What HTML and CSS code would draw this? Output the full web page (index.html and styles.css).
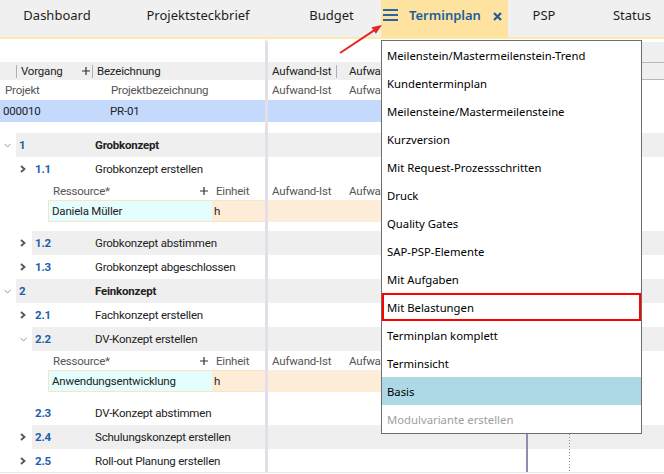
FILE: index.html
```html
<!DOCTYPE html>
<html lang="de">
<head>
    <meta charset="UTF-8">
    <title>Terminplan</title>
    <link rel="stylesheet" href="styles.css">
</head>
<body>

    <div class="tabs">
        <div class="tab w-dash">Dashboard</div>
        <div class="tab w-proj">Projektsteckbrief</div>
        <div class="tab w-budget">Budget</div>
        <div class="tab w-termin active">
            <svg class="burger" width="15" height="13" viewBox="0 0 15 13">
                <rect x="0" y="0" width="15" height="2"/>
                <rect x="0" y="5" width="15" height="2"/>
                <rect x="0" y="10" width="15" height="2"/>
            </svg>
            <span class="tab-title">Terminplan</span>
            <svg class="close" width="9" height="9" viewBox="0 0 9 9">
                <path d="M1 1L8 8M8 1L1 8"/>
            </svg>
        </div>
        <div class="tab w-psp">PSP</div>
        <div class="tab w-status">Status</div>
    </div>

    <div class="grid">
        <!-- Kopfbereich -->
        <div class="row blank">
            <div class="l"></div>
            <div class="r"><div class="t"></div><div class="g ghead"></div></div>
        </div>
        <div class="row head">
            <div class="l">
                <span class="sep first"></span>
                <span class="h-vor">Vorgang</span>
                <span class="plus"><svg width="8" height="8" viewBox="0 0 8 8"><path d="M4 0V8M0 4H8"/></svg></span>
                <span class="sep"></span>
                <span class="h-bez">Bezeichnung</span>
            </div>
            <div class="r">
                <div class="t"><span class="c1">Aufwand-Ist</span><span class="sep"></span><span class="c2">Aufwand-Plan</span></div>
                <div class="g ghead gline"></div>
            </div>
        </div>
        <div class="row label">
            <div class="l"><span class="p1">Projekt</span><span>Projektbezeichnung</span></div>
            <div class="r"><div class="t"><span class="d1">Aufwand-Ist</span><span class="d2">Aufwand-Plan</span></div><div class="g"></div></div>
        </div>
        <div class="row proj">
            <div class="l"><span class="p0">000010</span><span>PR-01</span></div>
            <div class="r"><div class="t"></div><div class="g"></div></div>
        </div>
        <div class="row gap11"><div class="l"></div><div class="r"><div class="t"></div><div class="g"></div></div></div>

        <!-- Vorgänge -->
        <div class="row task lv1 shade">
            <div class="l"><span class="ind"><svg class="open" width="7" height="5" viewBox="0 0 7 5"><path d="M0.5 0.8L3.5 4L6.5 0.8"/></svg></span>
                <div class="cell"><span class="num">1</span><span class="name">Grobkonzept</span></div></div>
            <div class="r"><div class="t"></div><div class="g"></div></div>
        </div>
        <div class="row task lv2">
            <div class="l"><span class="ind"><svg class="shut" width="6" height="8" viewBox="0 0 6 8"><path d="M1 1L4.5 4L1 7"/></svg></span>
                <div class="cell"><span class="num">1.1</span><span class="name">Grobkonzept erstellen</span></div></div>
            <div class="r"><div class="t"></div><div class="g"></div></div>
        </div>
        <div class="row reshead">
            <div class="l"><div class="res">
                <span class="rn">Ressource*<svg width="8" height="8" viewBox="0 0 8 8"><path d="M4 0V8M0 4H8"/></svg></span>
                <span class="ru">Einheit</span>
            </div></div>
            <div class="r"><div class="t"><span class="d1">Aufwand-Ist</span><span class="d2">Aufwand-Plan</span></div><div class="g"></div></div>
        </div>
        <div class="row resrow">
            <div class="l"><div class="res"><span class="rn">Daniela Müller</span><span class="ru">h</span></div></div>
            <div class="r"><div class="t"></div><div class="g"></div></div>
        </div>
        <div class="row gap9"><div class="l"></div><div class="r"><div class="t"></div><div class="g"></div></div></div>

        <div class="row task lv2 shade">
            <div class="l"><span class="ind"><svg class="shut" width="6" height="8" viewBox="0 0 6 8"><path d="M1 1L4.5 4L1 7"/></svg></span>
                <div class="cell"><span class="num">1.2</span><span class="name">Grobkonzept abstimmen</span></div></div>
            <div class="r"><div class="t"></div><div class="g"></div></div>
        </div>
        <div class="row task lv2">
            <div class="l"><span class="ind"><svg class="shut" width="6" height="8" viewBox="0 0 6 8"><path d="M1 1L4.5 4L1 7"/></svg></span>
                <div class="cell"><span class="num">1.3</span><span class="name">Grobkonzept abgeschlossen</span></div></div>
            <div class="r"><div class="t"></div><div class="g"></div></div>
        </div>
        <div class="row task lv1 shade">
            <div class="l"><span class="ind"><svg class="open" width="7" height="5" viewBox="0 0 7 5"><path d="M0.5 0.8L3.5 4L6.5 0.8"/></svg></span>
                <div class="cell"><span class="num">2</span><span class="name">Feinkonzept</span></div></div>
            <div class="r"><div class="t"></div><div class="g"></div></div>
        </div>
        <div class="row task lv2">
            <div class="l"><span class="ind"><svg class="shut" width="6" height="8" viewBox="0 0 6 8"><path d="M1 1L4.5 4L1 7"/></svg></span>
                <div class="cell"><span class="num">2.1</span><span class="name">Fachkonzept erstellen</span></div></div>
            <div class="r"><div class="t"></div><div class="g"></div></div>
        </div>
        <div class="row task lv2 shade">
            <div class="l"><span class="ind"><svg class="open" width="7" height="5" viewBox="0 0 7 5"><path d="M0.5 0.8L3.5 4L6.5 0.8"/></svg></span>
                <div class="cell"><span class="num">2.2</span><span class="name">DV-Konzept erstellen</span></div></div>
            <div class="r"><div class="t"></div><div class="g"></div></div>
        </div>
        <div class="row reshead">
            <div class="l"><div class="res">
                <span class="rn">Ressource*<svg width="8" height="8" viewBox="0 0 8 8"><path d="M4 0V8M0 4H8"/></svg></span>
                <span class="ru">Einheit</span>
            </div></div>
            <div class="r"><div class="t"><span class="d1">Aufwand-Ist</span><span class="d2">Aufwand-Plan</span></div><div class="g"></div></div>
        </div>
        <div class="row resrow">
            <div class="l"><div class="res"><span class="rn">Anwendungsentwicklung</span><span class="ru">h</span></div></div>
            <div class="r"><div class="t"></div><div class="g"></div></div>
        </div>
        <div class="row gap9"><div class="l"></div><div class="r"><div class="t"></div><div class="g"></div></div></div>

        <div class="row task lv2">
            <div class="l"><span class="ind"></span>
                <div class="cell"><span class="num">2.3</span><span class="name">DV-Konzept abstimmen</span></div></div>
            <div class="r"><div class="t"></div><div class="g"></div></div>
        </div>
        <div class="row task lv2 shade">
            <div class="l"><span class="ind"><svg class="shut" width="6" height="8" viewBox="0 0 6 8"><path d="M1 1L4.5 4L1 7"/></svg></span>
                <div class="cell"><span class="num">2.4</span><span class="name">Schulungskonzept erstellen</span></div></div>
            <div class="r"><div class="t"></div><div class="g"></div></div>
        </div>
        <div class="row task lv2 last">
            <div class="l"><span class="ind"><svg class="shut" width="6" height="8" viewBox="0 0 6 8"><path d="M1 1L4.5 4L1 7"/></svg></span>
                <div class="cell"><span class="num">2.5</span><span class="name">Roll-out Planung erstellen</span></div></div>
            <div class="r"><div class="t"></div><div class="g"></div></div>
        </div>
    </div>

    <!-- Hinweispfeil -->
    <svg class="arrow" width="664" height="474" viewBox="0 0 664 474">
        <line x1="340" y1="53" x2="374.5" y2="30.2"/>
        <polygon points="382,25 375.9,33.8 371.5,27.2"/>
    </svg>

    <!-- Ansichten-Menü -->
    <div class="menu">
        <div class="item">Meilenstein/Mastermeilenstein-Trend</div>
        <div class="item">Kundenterminplan</div>
        <div class="item">Meilensteine/Mastermeilensteine</div>
        <div class="item">Kurzversion</div>
        <div class="item">Mit Request-Prozessschritten</div>
        <div class="item">Druck</div>
        <div class="item">Quality Gates</div>
        <div class="item">SAP-PSP-Elemente</div>
        <div class="item">Mit Aufgaben</div>
        <div class="item marked">Mit Belastungen</div>
        <div class="item">Terminplan komplett</div>
        <div class="item">Terminsicht</div>
        <div class="item sel">Basis</div>
        <div class="item off">Modulvariante erstellen</div>
    </div>

</body>
</html>
```

FILE: styles.css
```css
* {
    box-sizing: border-box;
}

body {
    margin: 0;
    width: 664px;
    height: 474px;
    position: relative;
    overflow: hidden;
    background-color: #fff;
    font-family: Roboto, "Liberation Sans", sans-serif;
    font-size: 11.5px;
    letter-spacing: -0.2px;
    color: #222;
}

/* Reiter */
.tabs {
    display: flex;
    height: 39px;
    background-color: #f0f0f0;
    border-bottom: 2px solid #fde9a8;
    font-family: "Noto Sans", sans-serif;
    font-size: 13px;
    letter-spacing: 0;
    color: #1e1e1e;
}

.tab {
    display: flex;
    align-items: center;
    justify-content: center;
    padding-bottom: 7px;
    white-space: nowrap;
}

.w-dash { width: 114px; }
.w-proj { width: 168px; }
.w-budget { width: 99px; }
.w-termin { width: 127px; }
.w-psp { width: 72px; }
.w-status { width: 84px; padding-left: 20px; }

.tab.active {
    justify-content: flex-start;
    padding-left: 2px;
    background-color: #fde39f;
    color: #1f5e9c;
}

.burger {
    fill: #2a64a2;
    margin-top: 1px;
}

.tab-title {
    margin-left: 11px;
    font-weight: 600;
}

.close {
    margin-left: 12px;
    margin-top: 2px;
    stroke: #1f5e9c;
    stroke-width: 2.2;
}

/* Raster */
.row {
    display: flex;
}

.l {
    width: 265px;
    display: flex;
    align-items: center;
    white-space: nowrap;
    overflow: hidden;
}

.r {
    flex: 1;
    display: flex;
    border-left: 3px solid #e3dee8;
}

.t {
    width: 258px;
    display: flex;
    align-items: center;
    white-space: nowrap;
    overflow: hidden;
}

.g {
    flex: 1;
    border-left: 2px solid #8c90ad;
    background-image: linear-gradient(#8a8a8a 50%, transparent 50%);
    background-size: 1px 3px;
    background-position: 41px 0;
    background-repeat: repeat-y;
}

.g.ghead {
    background-image: none;
    background-color: #efefef;
}

.g.gline {
    border-top: 1px solid #b8b8b8;
    border-bottom: 1px solid #b8b8b8;
}

.blank { height: 23px; }
.gap11 { height: 11px; }
.gap9 { height: 9px; }

.blank .r {
    border-top: 3px solid #fff;
}

.head {
    height: 18px;
    background-color: #efefef;
}

.sep {
    width: 1px;
    height: 13px;
    flex-shrink: 0;
    background-color: #b0b0b0;
}

.sep.first {
    margin-left: 16px;
}

.h-vor {
    width: 62px;
    padding-left: 4px;
}

.plus {
    width: 13px;
    display: flex;
    justify-content: center;
}

.plus svg, .rn svg {
    stroke: #333;
    stroke-width: 1.2;
}

.h-bez {
    padding-left: 4px;
}

.head .c1 {
    width: 68px;
    padding-left: 4px;
}

/* zweite Spalte wird vom Menü verdeckt */
.head .c2 {
    width: 44px;
    padding-left: 12px;
    overflow: hidden;
}

.d2 {
    width: 32px;
    overflow: hidden;
}

.label {
    height: 20px;
    color: #555;
}

.p1 {
    width: 111px;
    padding-left: 5px;
}

.d1 {
    width: 81px;
    padding-left: 4px;
}

.proj {
    height: 22px;
}

.proj .l, .proj .t {
    background-color: #c5d9fc;
}

.p0 {
    width: 110px;
    padding-left: 3px;
}

/* Vorgänge */
.task {
    height: 24px;
}

.task .l {
    align-items: stretch;
}

.ind {
    display: flex;
    align-items: center;
    flex-shrink: 0;
}

.lv1 .ind {
    width: 16px;
    padding-left: 4px;
}

.lv2 .ind {
    width: 32px;
    padding-left: 20px;
}

.cell {
    flex: 1;
    display: flex;
    align-items: center;
}

.shade .cell, .shade .r {
    background-color: #efefef;
}

.num {
    color: #1c5fab;
    font-weight: bold;
    padding-left: 3px;
}

.lv1 .num { width: 79px; }
.lv2 .num { width: 63px; }

.lv1 .name {
    font-weight: bold;
}

.open {
    fill: none;
    stroke: #9a9a9a;
    stroke-width: 1;
}

.shut {
    fill: none;
    stroke: #555;
    stroke-width: 1.8;
}

.last {
    border-bottom: 1px solid #e6e6e6;
}

/* Ressourcen */
.res {
    display: flex;
    margin-left: 48px;
    height: 100%;
    width: 217px;
}

.rn {
    width: 163px;
    display: flex;
    align-items: center;
    justify-content: space-between;
    padding: 0 3px 0 5px;
}

.ru {
    display: flex;
    align-items: center;
    padding-left: 5px;
}

.reshead {
    height: 19px;
    color: #555;
}

.resrow {
    height: 22px;
}

.resrow .res {
    background-color: #fdedd8;
    border: 1px solid #fbe3c6;
    border-right: none;
}

.resrow .rn {
    background-color: #e4fdfd;
    padding-left: 3px;
}

.resrow .ru {
    padding-left: 2px;
}

.resrow .t {
    background-color: #fdedd8;
}

/* Pfeil */
.arrow {
    position: absolute;
    top: 0;
    left: 0;
    pointer-events: none;
}

.arrow line {
    stroke: #e62626;
    stroke-width: 2;
}

.arrow polygon {
    fill: #e62626;
}

/* Menü */
.menu {
    position: absolute;
    left: 381px;
    top: 40px;
    width: 261px;
    background-color: #fff;
    border: 1px solid #6e6e6e;
    font-family: "Noto Sans", sans-serif;
    font-size: 11.3px;
    letter-spacing: 0;
    color: #000;
}

.item {
    height: 28px;
    display: flex;
    align-items: center;
    padding-left: 5px;
    white-space: nowrap;
}

.item.marked {
    box-shadow: inset 0 0 0 2px #ff0000;
}

.item.sel {
    background-color: #add8e6;
}

.item.off {
    color: #a0a0a0;
}
```
